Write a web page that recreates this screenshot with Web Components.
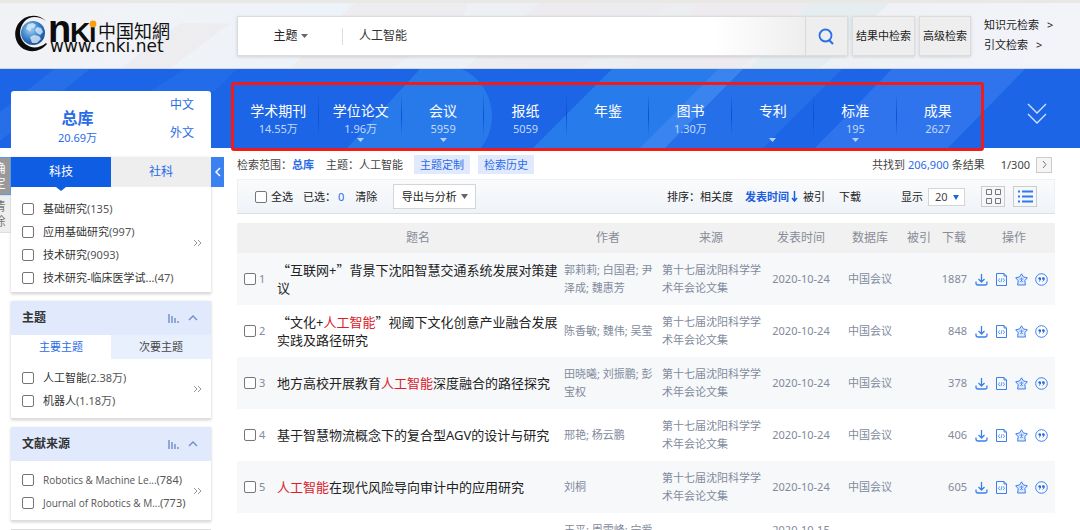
<!DOCTYPE html>
<html lang="zh-CN">
<head>
<meta charset="utf-8">
<title>中国知网 检索结果</title>
<style>
  html { scrollbar-width: none; }
  body { margin: 0; background: #fff; color: #333; font: 11px/18px "Noto Sans", "Noto Sans CJK SC", sans-serif; overflow-x: hidden; }
</style>
</head>
<body>
<cnki-app></cnki-app>
<script>
const BASE = `
  *, *::before, *::after { box-sizing: border-box; }
  a { color: inherit; text-decoration: none; }
  button, input, select { font: inherit; color: inherit; margin: 0; }
  button { cursor: pointer; padding: 0; border: 0; background: none; }
  svg { display: block; flex: none; }
  input[type=checkbox] { appearance: none; flex: none; width: 12px; height: 12px; border: 1px solid #767676; border-radius: 2px; background: #fff; }
  input[type=checkbox]:checked { background: #1b67e6; }
  select { appearance: none; border: 0; background: none; outline: 0; }
`;
class Base extends HTMLElement {
  constructor() {
    super();
    this.attachShadow({ mode: "open" });
  }
  connectedCallback() {
    this.shadowRoot.innerHTML = `<style>${BASE}${this.css()}</style>${this.html()}`;
  }
  css() { return ""; }
  html() { return ""; }
}

customElements.define("cnki-logo", class extends Base {
  css() { return `:host { display: block; width: 160px; height: 44px; }`; }
  html() { return `
    <svg width="160" height="44" viewBox="14 12 160 44" role="img" aria-label="中国知网">
      <defs>
        <radialGradient id="g" cx=".4" cy=".35" r=".75"><stop offset="0" stop-color="#a9d4f5"/><stop offset=".5" stop-color="#3c84cb"/><stop offset="1" stop-color="#123f8c"/></radialGradient>
      </defs>
      <path d="M46 21C38 13 25 14 18 24c-6 10-2 22 8 26 8 3 16 0 21-6l-1-1c-6 5-14 6-19 2-8-5-9-16-3-23 5-6 14-7 22-1z" fill="#0c0c0c"/>
      <circle cx="33" cy="33" r="12" fill="url(#g)"/>
      <path d="M28 24l5-1 3 2-2 3-3 0-1 3-4-2zM37 27l4 1 2 4-3 3-3-2-2-3zM30 37l4-2 5 1 2 3-4 4-5 0z" fill="#e4f2fb" opacity=".75"/>
      <g fill="#0c0c0c" font-family="Liberation Sans, sans-serif" font-weight="700">
        <text x="48" y="42" font-size="38">n</text>
        <text x="70" y="42" font-size="28">K</text>
        <text x="89" y="42" font-size="27">i</text>
      </g>
      <rect x="90" y="20" width="7" height="6" fill="#f0f2f7"/>
      <circle cx="93" cy="24" r="3.400" fill="#f9a010"/>
      <text x="98" y="38" font-family="Noto Sans CJK SC, sans-serif" font-size="18" fill="#111">中国知網</text>
      <text x="50" y="52" font-family="DejaVu Sans, sans-serif" font-size="17" fill="#111">www.cnki.net</text>
    </svg>`; }
});

customElements.define("search-header", class extends Base {
  css() { return `
    :host { display: flex; align-items: flex-start; position: relative; height: 69px; padding: 13px 0 0 14px; border-top: 3px solid #e9e8e5; border-bottom: 1px solid #d3d6dc; background: linear-gradient(90deg, #f1f2f6, #eef3f9 30%, #ecedf1 60%, #f2f4f9); overflow: hidden; }
    .deco { position: absolute; inset: 0; width: 100%; height: 100%; }
    cnki-logo { position: relative; flex: none; margin: -4px 63px 0 0; }
    form { display: flex; position: relative; flex: 1; min-width: 0; gap: 4px; }
    .box { display: flex; flex: 1; min-width: 0; height: 40px; background: linear-gradient(90deg, #fff 78%, #eee 93%); border: 1px solid #dcdcdc; box-shadow: 0 1px 3px #0002; }
    .field { display: flex; align-items: center; justify-content: center; position: relative; width: 105px; font-size: 12px; color: #222; }
    .field::after { content: ""; position: absolute; right: 0; top: 11px; height: 17px; border-right: 1px solid #ddd; }
    .field svg { margin-left: 3px; }
    input { flex: 1; min-width: 0; border: 0; outline: 0; background: none; padding: 0 16px; font-size: 12px; color: #333; }
    .go { display: grid; place-items: center; width: 42px; border-left: 1px solid #d8d8d8; background: #eee; }
    .btn { height: 40px; width: 63px; background: #eee; border: 1px solid #dcdcdc; box-shadow: 0 1px 3px #0002; color: #222; white-space: nowrap; }
    .btn.s { width: 52px; }
    nav { display: flex; flex-direction: column; position: relative; width: 96px; margin-left: 13px; gap: 2px; color: #222; }
    nav span { margin-left: 8px; }
  `; }
  html() { return `
    <svg class="deco" viewBox="0 0 1080 66" preserveAspectRatio="xMidYMid slice" aria-hidden="true">
      <g fill="#ece9ec" opacity=".7"><path d="M355 0h113l-7 20-70 46H290zM540 0h130l-90 66H465zM700 0h110l-70 66H630zM120 66l60-45h50l-60 45z"/></g>
      <path d="M810 0h80l-70 66h-70z" fill="#e6edf1"/>
    </svg>
    <cnki-logo></cnki-logo>
    <form onsubmit="return false">
      <div class="box">
        <button class="field" type="button" aria-haspopup="listbox">主题<svg width="7" height="4" viewBox="0 0 7 4"><path d="M0 0h7L3.500 4z" fill="#666"/></svg></button>
        <input type="text" value="人工智能" aria-label="检索词">
        <button class="go" aria-label="检索"><svg width="17" height="17" viewBox="0 0 17 17" fill="none" stroke="#2a70e8" stroke-width="1.800"><circle cx="7.500" cy="7.500" r="6"/><path d="M11 12l4 4" stroke-width="2.200"/></svg></button>
      </div>
      <button class="btn" type="button">结果中检索</button>
      <button class="btn s" type="button">高级检索</button>
    </form>
    <nav><a href="#">知识元检索<span>&gt;</span></a><a href="#">引文检索<span>&gt;</span></a></nav>`; }
});

customElements.define("category-item", class extends Base {
  css() { return `
    :host { display: block; position: relative; text-align: center; color: #fff; }
    :host(:not(:last-of-type))::after { content: ""; position: absolute; right: 0; top: 8px; height: 44px; width: 1px; background: linear-gradient(#0b4fd400, #0b4fd4, #0b4fd400); }
    a { display: flex; flex-direction: column; align-items: center; padding-top: 17px; }
    b { font-weight: 400; font-size: 14px; line-height: 18px; height: 18px; white-space: nowrap; }
    span { line-height: 17px; height: 17px; color: #c3d8fa; }
    svg { margin-top: 1px; }
  `; }
  html() {
    return `<a href="#"><b><slot></slot></b><span>${this.getAttribute("count") || ""}</span>${this.hasAttribute("more") ? `<svg width="7" height="4" viewBox="0 0 7 4"><path d="M0 0h7L3.500 4z" fill="#b6d0fa"/></svg>` : ""}</a>`;
  }
});

customElements.define("category-band", class extends Base {
  css() { return `
    :host { display: grid; grid-template-columns: 200px minmax(0, 1fr) 96px; column-gap: 0; position: relative; height: 79px; padding-left: 11px; background: #1b65e6; color: #2a6be8; }
    .deco { position: absolute; inset: 0; width: 100%; height: 100%; }
    .total { display: flex; position: relative; align-self: end; height: 57px; padding: 0 17px 0 47px; justify-content: space-between; background: #fff; border-radius: 3px 3px 0 0; }
    .total div { display: flex; flex-direction: column; align-items: center; }
    .sum { padding-top: 16px; }
    .sum b { font-size: 16px; line-height: 22px; }
    .sum span { line-height: 18px; }
    .lang { font-size: 12px; line-height: 28px; }
    .cats { display: grid; grid-template-columns: repeat(9, minmax(0, 1fr)); position: relative; z-index: 1; height: 69px; margin: 13px 0 -3px 20px; padding: 0 2px 0 3px; border: 3px solid #f01c1c; border-radius: 3px; }
    .more { position: relative; justify-self: center; align-self: start; margin: 34px 0 0 10px; }
  `; }
  html() {
    const cats = [["学术期刊", "14.55万"], ["学位论文", "1.96万", 1], ["会议", "5959", 1], ["报纸", "5059"], ["年鉴", ""], ["图书", "1.30万"], ["专利", "", 1], ["标准", "195", 1], ["成果", "2627"]];
    return `
    <svg class="deco" viewBox="0 0 1080 79" preserveAspectRatio="xMidYMid slice" aria-hidden="true">
      <path d="M0 43L54 0H90L0 72z" fill="#276ee9"/>
      <path d="M150 22L185 0H237L215 22z" fill="#226ce9"/>
      <path d="M347 79L420 0H462A52 52 0 0 1 481 79z" fill="#287aea"/>
      <path d="M533 79L612 0H743L665 79z" fill="#287bea"/>
      <path d="M665 79L743 0H842L763 79z" fill="#2570e8"/>
      <path d="M665 79L743 0H718L640 79z" fill="#3984ee"/>
      <path d="M815 79L892 0H1025L948 79z" fill="#2f74ec"/>
    </svg>
    <div class="total">
      <div class="sum"><b>总库</b><span>20.69万</span></div>
      <div class="lang"><a href="#">中文</a><a href="#">外文</a></div>
    </div>
    <nav class="cats">${cats.map(([n, c, m]) => `<category-item count="${c}" ${m ? "more" : ""}>${n}</category-item>`).join("")}</nav>
    <button class="more" aria-label="展开"><svg width="20" height="22" viewBox="0 0 20 22" fill="none" stroke="#d5e4fd" stroke-width="1.300"><path d="M1 1l9 9 9-9M1 11l9 9 9-9"/></svg></button>`;
  }
});

customElements.define("facet-card", class extends Base {
  css() { return `
    :host { display: block; background: #fff; border-bottom: 1px solid #ddd; box-shadow: 0 1px 3px #0003; }
    header { display: flex; align-items: center; height: 34px; padding: 0 13px 0 11px; background: #e1eafc; }
    h3 { flex: 1; margin: 0; font-size: 12px; font-weight: 700; color: #333; }
    header svg { margin-left: 9px; }
    .body { display: flex; align-items: center; padding: 7px 9px 6px 11px; }
    :host([first]) .body { padding: 10px 9px 3px 11px; }
    ::slotted(ul) { flex: 1; min-width: 0; }
  `; }
  html() {
    const t = this.getAttribute("heading");
    return `${t ? `<header><h3>${t}</h3>
      <svg width="11" height="9" viewBox="0 0 11 9" stroke="#6f8cc9" stroke-width="1.400"><path d="M1 0v9M4 2v7M7 4v5M10 7v2"/></svg>
      <svg width="10" height="6" viewBox="0 0 10 6" fill="none" stroke="#6f8cc9" stroke-width="1.300"><path d="M1 5l4-4 4 4"/></svg></header>` : ""}
      <slot name="tabs"></slot><div class="body"><slot></slot><a class="more" href="#" aria-label="更多"><svg width="9" height="8" viewBox="0 0 9 8" fill="none" stroke="#999"><path d="M1 1l3 3-3 3M5 1l3 3-3 3"/></svg></a></div>`;
  }
});

customElements.define("side-bar", class extends Base {
  css() { return `
    :host { display: flex; flex-direction: column; gap: 8px; padding-top: 9px; position: relative; }
    ul { list-style: none; margin: 0; padding: 0; }
    li label { display: flex; align-items: center; gap: 9px; height: 23px; white-space: nowrap; color: #333; }
    li small { font-size: 11px; color: #555; }
    .cut { display: inline-flex; }
    .cut i { font-style: normal; min-width: 109px; }
    .en i { font-family: "Open Sans", sans-serif; font-size: 10px; color: #555; }
    .tabs { display: grid; grid-template-columns: 1fr 1fr; }
    .tabs button { position: relative; height: 24px; }
    .sub button { color: #2a6be8; }
    .sub button + button { background: #e9f0fd; color: #444; }
    .main button { height: 30px; font-size: 12px; background: #0e5de3; color: #fff; }
    .main button + button { background: #eee; color: #2a6be8; }
    .main button:first-child::after { content: ""; position: absolute; left: 50%; top: 100%; margin-left: -5px; border: 5px solid transparent; border-top: 4px solid #0e5de3; border-bottom: 0; }
    .fold { position: absolute; left: 100%; top: 9px; display: grid; place-items: center; width: 13px; height: 30px; background: #3b82f0; }
    .float { position: absolute; left: -20px; top: 9px; width: 20px; display: grid; text-align: center; font-size: 12px; line-height: 15px; }
    .float button { height: 38px; padding: 0 3px 0 0; background: #999; color: #fff; border: 1px solid #5a9be8; }
    .float button + button { background: #eee; color: #777; border-color: #ddd; }
    .peek { height: 20px; background: #e1eafc; border-top: 1px solid #ddd; }
  `; }
  html() {
    const n = (a, b) => `<li><label><input type="checkbox"><span>${a}<small>(${b})</small></span></label></li>`;
    const e = (a, b, c = "") => `<li><label><input type="checkbox"><span class="cut ${c}"><i>${a}</i><small>(${b})</small></span></label></li>`;
    return `
    <facet-card first>
      <div class="tabs main" slot="tabs"><button>科技</button><button>社科</button></div>
      <ul>${n("基础研究", 135)}${n("应用基础研究", 997)}${n("技术研究", 9093)}${e("技术研究-临床医学试...", 47)}</ul>
    </facet-card>
    <facet-card heading="主题">
      <div class="tabs sub" slot="tabs"><button>主要主题</button><button>次要主题</button></div>
      <ul>${n("人工智能", "2.38万")}${n("机器人", "1.18万")}</ul>
    </facet-card>
    <facet-card heading="文献来源">
      <ul>${e("Robotics &amp; Machine Le...", 784, "en")}${e("Journal of Robotics &amp; M...", 773, "en")}</ul>
    </facet-card>
    <div class="peek"></div>
    <button class="fold" aria-label="收起"><svg width="6" height="10" viewBox="0 0 6 10" fill="none" stroke="#fff" stroke-width="1.500"><path d="M5 1L1 5l4 4"/></svg></button>
    <div class="float"><button>确<br>定</button><button>清<br>除</button></div>`;
  }
});

customElements.define("scope-line", class extends Base {
  css() { return `
    :host { display: flex; justify-content: space-between; padding: 7px 3px 5px 0; color: #444; }
    div { display: flex; align-items: center; height: 19px; line-height: 19px; white-space: nowrap; }
    .tag { background: #e1eafc; color: #2a6be8; padding: 0 6px; margin-left: 8px; }
    b, em { color: #2a6be8; font-style: normal; }
    em { margin: 0 3px; }
    .t { margin: 0 3px 0 12px; }
    .p { margin: 0 6px 0 16px; }
    .next { display: grid; place-items: center; width: 16px; height: 16px; background: #f5f5f5; border: 1px solid #ccc; }
  `; }
  html() { return `
    <div>检索范围：<b>总库</b><span class="t">主题：人工智能</span><a class="tag" href="#">主题定制</a><a class="tag" href="#">检索历史</a></div>
    <div>共找到<em>206,900</em>条结果<span class="p">1/300</span><button class="next" aria-label="下一页"><svg width="5" height="7" viewBox="0 0 5 7" fill="none" stroke="#777"><path d="M1 0l3 3.500L1 7"/></svg></button></div>`; }
});

customElements.define("result-toolbar", class extends Base {
  css() { return `
    :host { display: flex; align-items: center; justify-content: space-between; height: 35px; margin-bottom: 9px; padding: 0 17px; border: 1px solid #eef0f3; border-bottom-color: #d9dfe6; background: linear-gradient(#fafbfc, #eff3f8); color: #222; white-space: nowrap; }
    .g, label { display: flex; align-items: center; }
    .all { gap: 4px; }
    .n { color: #2a6be8; margin: 0 11px 0 2px; }
    .s { margin-left: 10px; }
    .exp { display: flex; align-items: center; justify-content: center; gap: 4px; width: 83px; height: 25px; margin-left: 16px; background: #fff; border: 1px solid #d5d5d5; }
    .on { display: flex; align-items: center; gap: 2px; margin: 0 5px 0 12px; color: #1b5fe0; font-weight: 700; }
    .dl { margin: 0 40px 0 14px; }
    .sel { position: relative; margin-left: 5px; }
    .sel select { display: block; width: 37px; height: 18px; padding: 0 0 0 6px; line-height: 16px; background: #fff; border: 1px solid #d5d5d5; color: #444; }
    .sel svg { position: absolute; right: 6px; top: 7px; pointer-events: none; }
    .v { display: grid; place-items: center; width: 24px; height: 21px; margin-left: 8px; background: #f5f7fa; border: 1px solid #ccc; }
    .v.a { margin-left: 16px; }
  `; }
  html() { return `
    <div class="g"><label class="all"><input type="checkbox">全选</label><span class="s">已选：</span><span class="n">0</span><a href="#">清除</a>
      <button class="exp">导出与分析<svg width="7" height="5" viewBox="0 0 7 5"><path d="M0 0h7L3.500 5z" fill="#666"/></svg></button></div>
    <div class="g">排序：<a href="#">相关度</a><a class="on" href="#">发表时间<svg width="7" height="11" viewBox="0 0 7 11" fill="none" stroke="#1b5fe0" stroke-width="1.500"><path d="M3.500 0v10M1 7l2.500 3L6 7"/></svg></a><a href="#">被引</a><a class="dl" href="#">下载</a>
      <label for="size">显示</label><span class="sel"><select id="size"><option>20</option><option>50</option></select><svg width="6" height="5" viewBox="0 0 6 5"><path d="M0 0h6L3 5z" fill="#1b67d6"/></svg></span>
      <button class="v a" aria-label="摘要"><svg width="15" height="15" viewBox="0 0 15 15" fill="none" stroke="#777"><path d="M.5.5h5v5h-5zM9.500.5h5v5h-5zM.5 9.500h5v5h-5zM9.500 9.500h5v5h-5z"/></svg></button>
      <button class="v" aria-label="列表"><svg width="15" height="13" viewBox="0 0 15 13" stroke="#2f7af0" stroke-width="1.800"><path d="M0 1.500h2M4 1.500h11M0 6.500h2M4 6.500h11M0 11.500h2M4 11.500h11"/></svg></button></div>`; }
});

customElements.define("row-actions", class extends Base {
  css() { return `:host { display: flex; gap: 7px; } a { display: block; }`; }
  html() {
    const s = `width="13" height="13" viewBox="0 0 13 13" fill="none" stroke="#3c80ee"`;
    return `
    <a href="#" aria-label="下载"><svg ${s} stroke-width="1.300"><path d="M6.500 1v7.500M3.500 6l3 3 3-3M1 8.500v1.500q0 2 2 2h7q2 0 2-2V8.500"/></svg></a>
    <a href="#" aria-label="HTML阅读"><svg ${s}><path d="M1.500.5h7.500l2.500 2.500v9.500h-10zM9 .5v2.500h2.500"/><path d="M5 5.500L3.200 7.200 5 9M8 5.500l1.800 1.700L8 9M7 5.200l-1 4" stroke-width=".8"/></svg></a>
    <a href="#" aria-label="收藏"><svg ${s} stroke-linejoin="round"><path d="M6.500.8l1.900 3.100 3.900.9-2.500 2.900.6 4.300H2.600l.6-4.300L.7 4.800l3.900-.9z" fill="#dbe8fd"/><path d="M4.500 6h4M6.500 4.500v4M5 9l1.500-1.500L8 9" stroke-width=".7"/></svg></a>
    <a href="#" aria-label="引用"><svg ${s}><circle cx="6.500" cy="6.500" r="5.800"/><g fill="#1f62d8" stroke="none"><circle cx="4.700" cy="5.500" r="1.300"/><circle cx="8.300" cy="5.500" r="1.300"/></g><path d="M5.600 5.500q.2 2-1.600 3M9.200 5.500q.2 2-1.600 3" stroke="#1f62d8" stroke-width=".9"/></svg></a>`;
  }
});

customElements.define("result-table", class extends Base {
  css() { return `
    :host { display: block; color: #828a9c; }
    table { width: 100%; table-layout: fixed; border-collapse: collapse; }
    th { height: 30px; padding: 0; background: #f1f1f1; font-weight: 400; font-size: 12px; color: #888c98; white-space: nowrap; }
    td { height: 52px; padding: 0; text-align: center; }
    tbody tr:nth-child(odd) { background: #f6f8fa; }
    td.c label { display: flex; align-items: center; gap: 3px; padding-left: 7px; }
    td.t, td.a, td.s { text-align: left; }
    td.t { font-size: 13px; color: #222; }
    td.a { padding-left: 5px; }
    td.s { padding: 0 3px 0 5px; }
    td.d { text-align: right; padding-right: 6px; }
    td.o { padding-left: 2px; }
    .t em { font-style: normal; color: #d9222a; }
    .t i { font-style: normal; font-family: "Noto Sans CJK SC", sans-serif; }
  `; }
  html() {
    const k = "<em>人工智能</em>", src = "第十七届沈阳科学学术年会论文集", d = "2020-10-24", db = "中国会议";
    const rows = [
      ["<i>“</i>互联网+<i>”</i>背景下沈阳智慧交通系统发展对策建议", "郭莉莉; 白国君; 尹泽成; 魏惠芳", src, d, db, 1887],
      [`<i>“</i>文化+${k}<i>”</i>视阈下文化创意产业融合发展实践及路径研究`, "陈香敏; 魏伟; 吴莹", src, d, db, 848],
      [`地方高校开展教育${k}深度融合的路径探究`, "田晓曦; 刘振鹏; 彭宝权", src, d, db, 378],
      ["基于智慧物流概念下的复合型AGV的设计与研究", "邢艳; 杨云鹏", src, d, db, 406],
      [`${k}在现代风险导向审计中的应用研究`, "刘桐", src, d, db, 605],
    ];
    return `<table>
      <colgroup>${["40px", "auto", "98px", "108px", "72px", "66px", "32px", "38px", "82px"].map(w => `<col style="width:${w}">`).join("")}</colgroup>
      <thead><tr>${["", "题名", "作者", "来源", "发表时间", "数据库", "被引", "下载", "操作"].map(h => `<th>${h}</th>`).join("")}</tr></thead>
      <tbody>${rows.map((r, i) => `<tr><td class="c"><label><input type="checkbox">${i + 1}</label></td><td class="t"><a href="#">${r[0]}</a></td><td class="a">${r[1]}</td><td class="s"><a href="#">${r[2]}</a></td><td>${r[3]}</td><td>${r[4]}</td><td></td><td class="d">${r[5]}</td><td class="o"><row-actions></row-actions></td></tr>`).join("")}
      <tr><td></td><td></td><td class="a">王平; 周雪峰; 宁爱民</td><td></td><td>2020-10-15 09:00</td><td></td><td></td><td></td><td></td></tr></tbody>
    </table>`;
  }
});

customElements.define("cnki-app", class extends Base {
  css() { return `
    :host { display: block; }
    main { display: grid; grid-template-columns: 200px minmax(0, 1fr); column-gap: 26px; padding: 0 25px 0 11px; }
  `; }
  html() { return `
    <search-header></search-header>
    <category-band></category-band>
    <main>
      <side-bar></side-bar>
      <section><scope-line></scope-line><result-toolbar></result-toolbar><result-table></result-table></section>
    </main>`; }
});
</script>
</body>
</html>
